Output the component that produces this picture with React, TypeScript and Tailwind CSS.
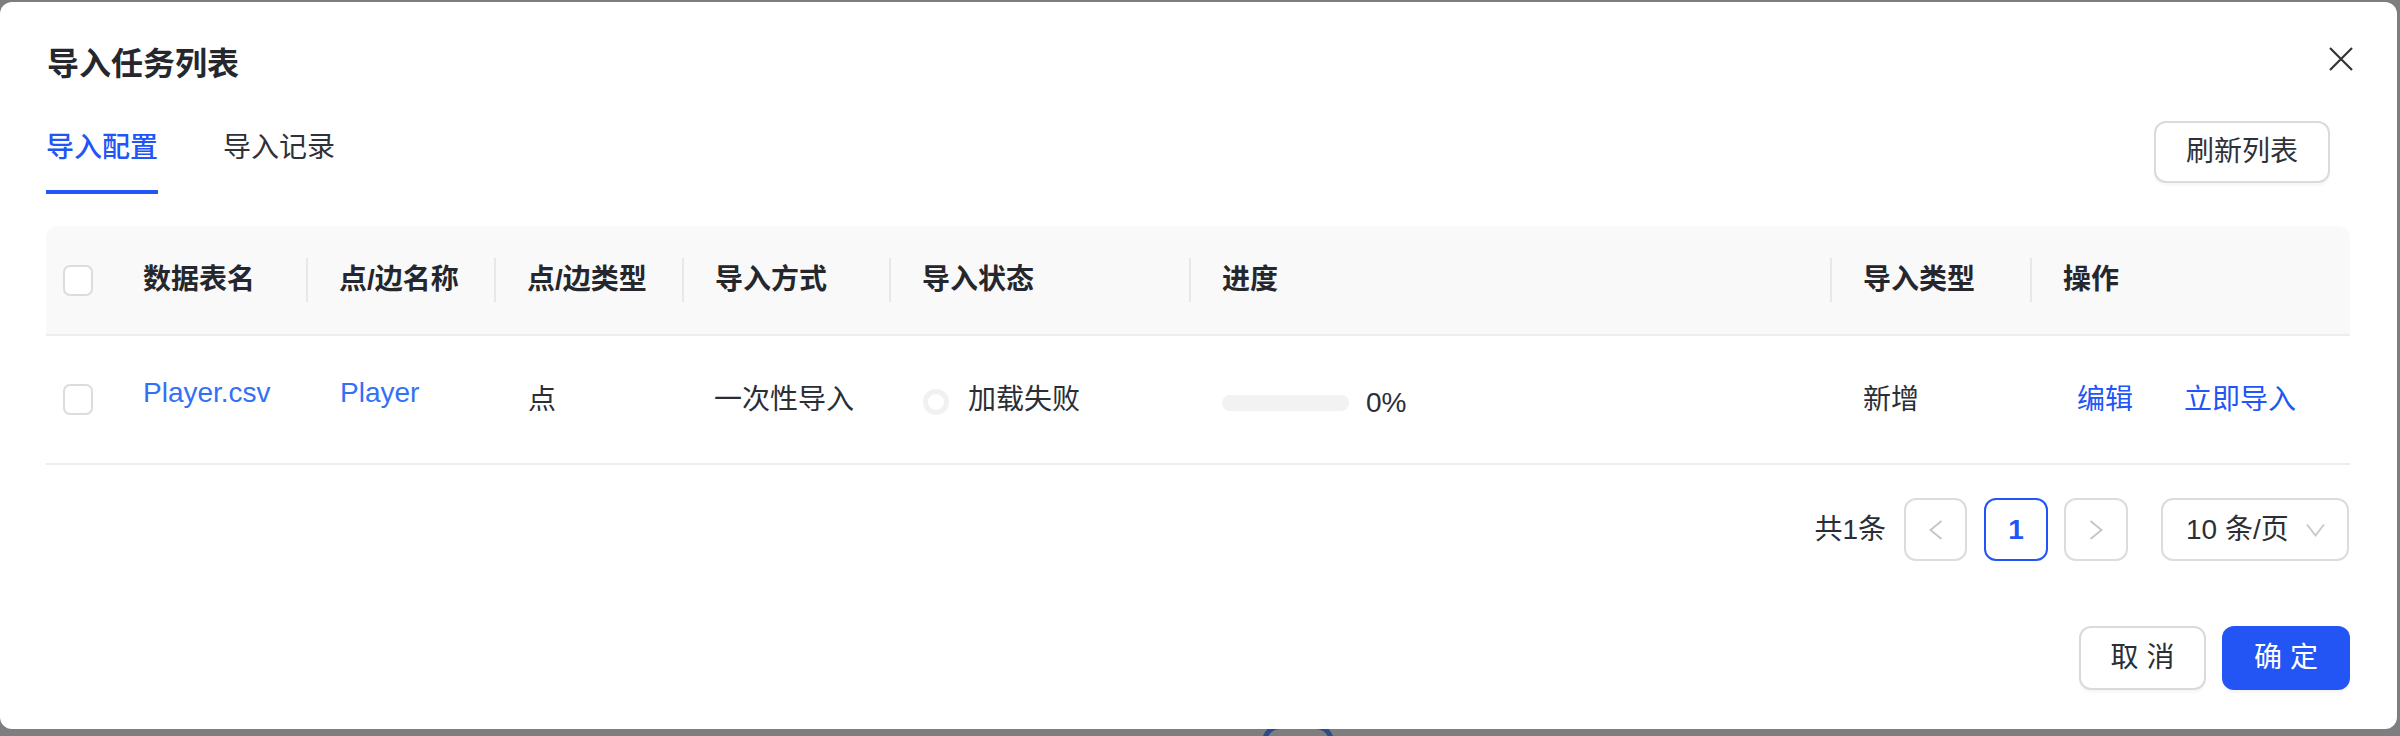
import React from "react";

const cols =
  "grid grid-cols-[64px_196px_188px_188px_207px_300px_641px_200px_1fr]";

const sep =
  "relative before:absolute before:left-0 before:top-1/2 before:-translate-y-1/2 before:h-[44px] before:w-[2px] before:bg-[#e8e8ea] before:content-['']";

function Checkbox() {
  return (
    <span className="block w-[30px] h-[31px] rounded-[7px] border-2 border-[#dcdcdf] bg-white" />
  );
}

function Chevron({ dir }: { dir: "left" | "right" | "down" }) {
  if (dir === "down") {
    return (
      <svg width="19" height="14" viewBox="0 0 19 14" fill="none">
        <path d="M1 1.5 9.5 12.5 18 1.5" stroke="#c9cbd1" strokeWidth="2" />
      </svg>
    );
  }
  return (
    <svg width="14" height="20" viewBox="0 0 14 20" fill="none">
      <path
        d={dir === "left" ? "M12.5 1 1.5 10 12.5 19" : "M1.5 1 12.5 10 1.5 19"}
        stroke="#c4c6cc"
        strokeWidth="2"
      />
    </svg>
  );
}

export default function App() {
  const headers = [
    "数据表名",
    "点/边名称",
    "点/边类型",
    "导入方式",
    "导入状态",
    "进度",
    "导入类型",
    "操作",
  ];

  return (
    <div className="relative w-[2400px] h-[736px] overflow-hidden bg-[#7e7e80] pt-[2px] font-['Liberation_Sans','Noto_Sans_CJK_SC',sans-serif] text-[#1f2329]">
      {/* something behind the overlay, peeking out under the dialog */}
      <span className="absolute left-[1262px] top-[724px] w-[72px] h-[36px] rounded-full border-[5px] border-[#2a4d88]" />

      <div className="relative flex flex-col w-[2397px] h-[727px] rounded-[12px] bg-white">
        {/* title */}
        <div className="flex justify-between items-start pl-[47px] pr-[44px] pt-[40px]">
          <h2 className="h-[44px] leading-[44px] text-[32px] font-semibold text-[#25272d]">
            导入任务列表
          </h2>
          <svg width="24" height="24" viewBox="0 0 24 24" className="mt-[5px]" fill="none">
            <path d="M1 1 23 23M23 1 1 23" stroke="#333" strokeWidth="2.2" />
          </svg>
        </div>

        {/* tabs */}
        <div className="flex justify-between items-start pl-[46px] pr-[67px] mt-[35px]">
          <div className="flex gap-[65px] mt-[7px]">
            <div className="flex flex-col">
              <span className="h-[40px] leading-[40px] text-[28px] text-[#2255f5] font-medium">
                导入配置
              </span>
              <span className="mt-[22px] h-[4px] bg-[#2255f5]" />
            </div>
            <span className="h-[40px] leading-[40px] text-[28px] text-[#2e3138]">
              导入记录
            </span>
          </div>
          <button className="w-[176px] h-[62px] rounded-[12px] border-2 border-[#dadada] bg-white text-[28px] text-[#2e3138] shadow-[0_3px_2px_rgba(0,0,0,0.03)]">
            刷新列表
          </button>
        </div>

        {/* table */}
        <div className="mx-[46px] mt-[32px] w-[2304px]">
          <div
            className={`${cols} h-[110px] rounded-t-[12px] bg-[#f9f9f9] border-b-2 border-[#ededed] text-[28px] font-semibold text-[#25272d]`}
          >
            <div className="flex items-center pl-[17px]">
              <Checkbox />
            </div>
            {headers.map((h, i) => (
              <div
                key={h}
                className={`flex items-center pl-[33px] ${i > 0 ? sep : ""}`}
              >
                {h}
              </div>
            ))}
          </div>

          <div
            className={`${cols} h-[129px] border-b-2 border-[#ededed] text-[28px] text-[#2b2e35]`}
          >
            <div className="flex items-center pl-[17px]">
              <Checkbox />
            </div>
            <div className="flex items-center pl-[33px] pb-[13px] text-[#3271f6]">
              Player.csv
            </div>
            <div className="flex items-center pl-[34px] pb-[13px] text-[#3271f6]">
              Player
            </div>
            <div className="flex items-center pl-[34px]">点</div>
            <div className="flex items-center pl-[32px]">一次性导入</div>
            <div className="flex items-center pl-[33px] gap-[18px]">
              <svg width="28" height="28" viewBox="0 0 28 28" className="mt-[5px]">
                <circle cx="14" cy="14" r="10.5" fill="none" stroke="#f1f1f2" strokeWidth="5" />
              </svg>
              <span>加载失败</span>
            </div>
            <div className="flex items-center pl-[33px] gap-[17px]">
              <span className="mt-[6px] w-[127px] h-[16px] rounded-full bg-[#f2f2f3]" />
              <span className="mt-[6px]">0%</span>
            </div>
            <div className="flex items-center pl-[33px]">新增</div>
            <div className="flex items-center pl-[47px] gap-[51px] text-[#2255f5]">
              <span>编辑</span>
              <span>立即导入</span>
            </div>
          </div>
        </div>

        {/* pagination */}
        <div className="flex justify-end items-center pr-[48px] mt-[33px] text-[28px] text-[#2b2e35]">
          <span className="mr-[18px]">共1条</span>
          <span className="flex items-center justify-center w-[63px] h-[63px] rounded-[12px] border-2 border-[#dcdcdf]">
            <Chevron dir="left" />
          </span>
          <span className="ml-[17px] flex items-center justify-center w-[64px] h-[63px] rounded-[12px] border-2 border-[#2255f5] text-[#2255f5] font-semibold">
            1
          </span>
          <span className="ml-[16px] flex items-center justify-center w-[64px] h-[63px] rounded-[12px] border-2 border-[#dcdcdf]">
            <Chevron dir="right" />
          </span>
          <span className="ml-[33px] flex items-center justify-between w-[188px] h-[63px] rounded-[12px] border-2 border-[#dcdcdf] pl-[23px] pr-[22px]">
            <span>10 条/页</span>
            <Chevron dir="down" />
          </span>
        </div>

        {/* footer */}
        <div className="flex justify-end gap-[16px] pr-[47px] mt-[65px]">
          <button className="w-[127px] h-[64px] rounded-[12px] border-2 border-[#dadada] bg-white text-[28px] text-[#2b2e35] shadow-[0_3px_2px_rgba(0,0,0,0.03)]">
            取 消
          </button>
          <button className="w-[128px] h-[64px] rounded-[12px] bg-[#2355f5] text-[28px] text-white shadow-[0_3px_2px_rgba(0,0,0,0.04)]">
            确 定
          </button>
        </div>
      </div>
    </div>
  );
}
